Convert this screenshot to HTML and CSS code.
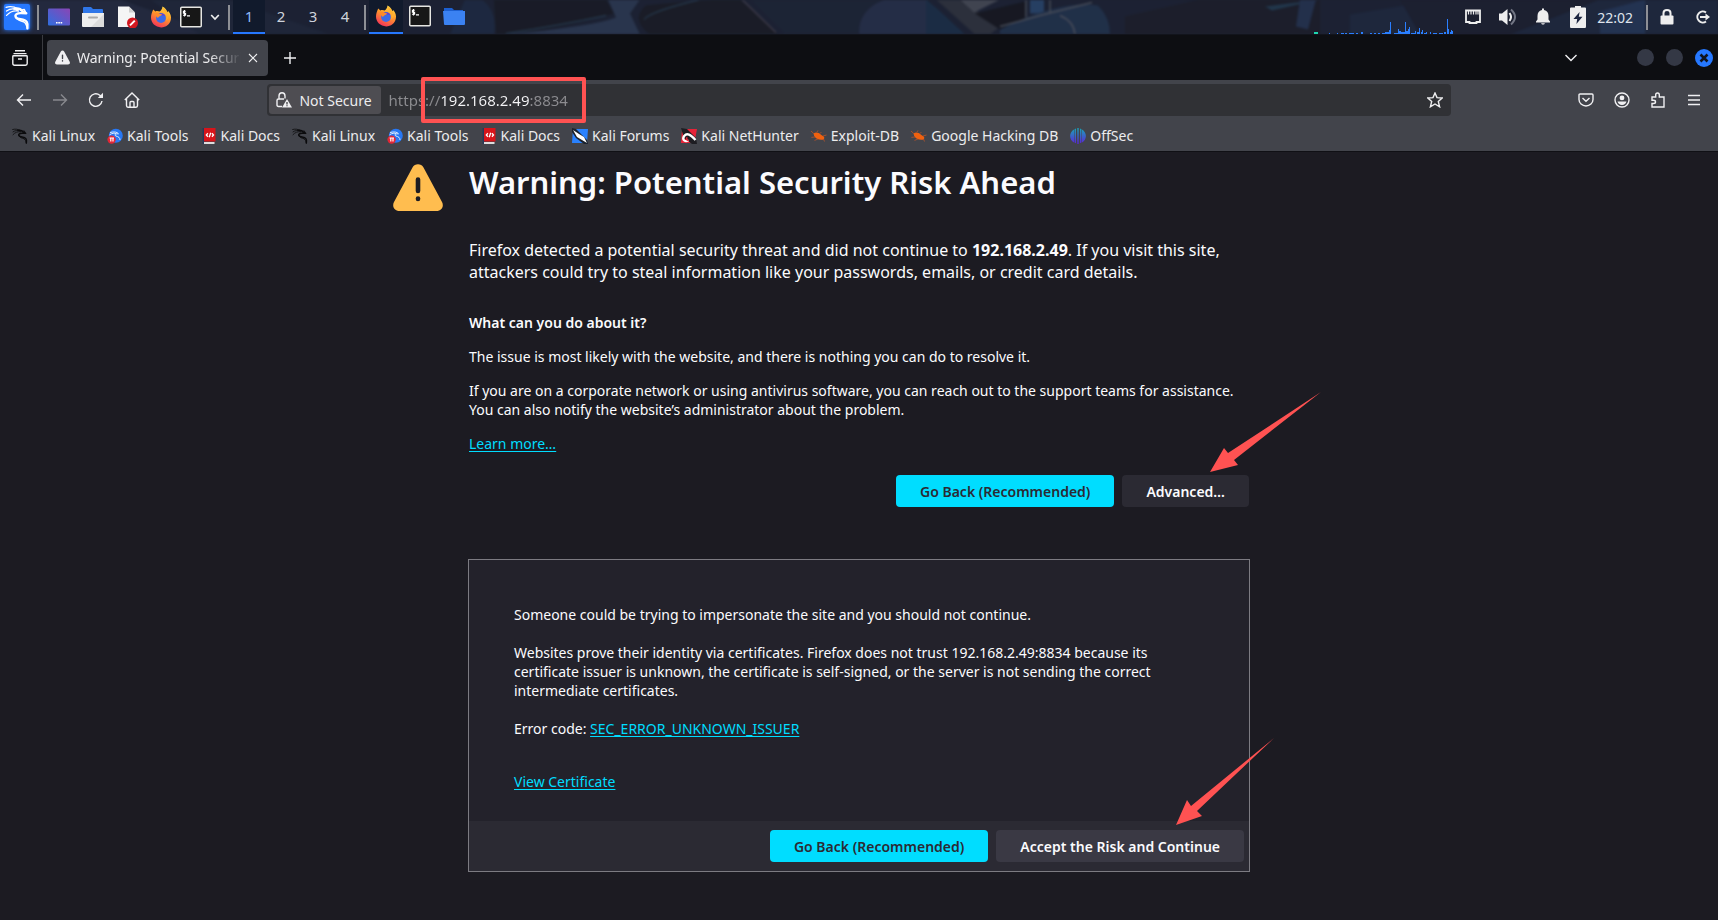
FILE: index.html
```html
<!DOCTYPE html>
<html lang="en">
<head>
<meta charset="utf-8">
<title>Warning: Potential Security Risk Ahead</title>
<link rel="stylesheet" href="styles.css">
</head>
<body>
<svg class="defs" aria-hidden="true">
  <defs>
    <linearGradient id="g-desk" x1="0" y1="1" x2="1" y2="0"><stop offset="0" stop-color="#2f6fe0"/><stop offset="1" stop-color="#8a45b5"/></linearGradient>
    <linearGradient id="g-fox" x1=".8" y1="0" x2=".3" y2="1"><stop offset="0" stop-color="#ffe14a"/><stop offset=".45" stop-color="#ff9a2b"/><stop offset="1" stop-color="#f4315a"/></linearGradient>
    <linearGradient id="g-off" x1="0" y1="0" x2="0" y2="1"><stop offset="0" stop-color="#18a6b8"/><stop offset="1" stop-color="#5b22d8"/></linearGradient>
  </defs>
  <symbol id="dragon" viewBox="0 0 24 24">
    <g fill="none" stroke="currentColor" stroke-linecap="round" stroke-linejoin="round">
      <path stroke-width="1.2" d="M1 2.2 C5 1.2 9 1.600 12.500 3.800 M1.500 5.800 C5 3.200 9 3.200 12.500 5 M1.500 10 C4.500 6.600 8.500 5 13 5.800"/>
      <path stroke-width="2.2" d="M9 3.600 C12 3 15.500 4.200 17 6.200 L20.500 8 L15.500 7.800 C11.500 7.600 9.200 9.400 10.300 11.600 C12 14.600 18.500 12.600 21 16.400 C22.200 18.400 21.800 20.500 21.500 22.500"/>
      <path stroke-width="1.4" d="M10.200 10.500 C11 15 15 14.800 18 16.200 C20.500 17.600 21 20 21.500 22.500 M15 5 L18.500 4.400 L20 7.500"/>
    </g>
  </symbol>
  <symbol id="firefox" viewBox="0 0 22 22">
    <path fill="url(#g-fox)" d="M3.2 3.4 5.4 5.4 C7 4.5 8.6 5 9.6 5.6 11 4.8 12.4 3 12.4 .6 15 1.8 16.8 4 17.4 6.2 L18.2 5 C20.6 7.6 21.6 10.6 20.8 13.8 19.8 18.4 16 21.4 11.2 21.4 5.4 21.4 1 17 1 11.6 1 8.6 2 6 3.2 3.4Z"/>
    <circle cx="11" cy="12" r="4.9" fill="#3c6be8"/>
    <path fill="#6a3bd0" d="M8 8.4 C10 6.8 14 7 15.4 9.8 L13 9.5Z"/>
    <path fill="#ff8a2a" d="M4.5 7.6 C6 6.4 8.4 6.8 9.6 7.8 L12.2 8.6 C11.6 10 9.8 10 9.2 10.6 8.7 12 7.2 12 6.7 11Z"/>
    <path fill="#ffb02e" d="M13.4 4.5 C17.2 7.4 17.4 12 15.8 15 18.7 12.8 19.8 8.2 16.4 5.2 15.5 3.6 14 2.6 13.2 2Z"/>
  </symbol>
  <symbol id="terminal" viewBox="0 0 22 21">
    <rect x=".75" y=".75" width="20.5" height="19.5" rx="1" fill="#171717" stroke="#e6e6e2" stroke-width="1.5"/>
    <path fill="none" stroke="#fff" stroke-width="1.1" d="M5.8 4.7 H3.4 V6.7 H5.6 V8.8 H3 M4.5 3.4 V10 M7 9.4 H10"/>
  </symbol>
  <symbol id="tri" viewBox="0 0 50 47">
    <path fill="currentColor" stroke="none" d="M19.5 3.5 C21.8 -.9 28.2 -.9 30.5 3.5 L49 38 C51.3 42.5 48.5 47 43.5 47 H6.5 C1.5 47 -1.3 42.5 1 38Z"/>
    <path stroke-width="4.6" stroke-linecap="round" d="M25 15.500 V27 M25 34.500 V35"/>
  </symbol>
  <symbol id="tools" viewBox="0 0 16 16">
    <circle cx="8.8" cy="7.8" r="7" fill="#2778f5"/>
    <path fill="none" stroke="#dceaff" d="M3 4.5 C7 3.4 10.5 4 11.5 5.8 C8 5.5 7 7 9 8 C11.5 8.8 13 9.6 13 12 M2.6 6.8 C5 5 7.6 5 9 5.6"/>
    <circle cx="4.6" cy="11.6" r="4.2" fill="#e32636"/>
    <path fill="none" stroke="#fff" stroke-width="1.2" d="M2.6 10 H7 M3.8 10 V13.6 M6 10 V13.6"/>
  </symbol>
  <symbol id="docs" viewBox="0 0 13 16">
    <path fill="#283858" d="M0 0 H3 V16 H0Z"/><path fill="#d7141a" d="M1.5 0 H13 V13.5 H1.5Z"/><path fill="#ddd" d="M1.5 14 H12 V16 H1.5Z"/>
    <path fill="none" stroke="#fff" stroke-width="1.3" d="M5.4 5.3 3.8 7 5.4 8.7 M9.4 5.3 11 7 9.4 8.7 M8.2 4.8 6.7 9.2"/>
  </symbol>
  <symbol id="forums" viewBox="0 0 16 16">
    <path fill="#2a82ff" d="M1 1 H16 L15 15 H0Z"/><path fill="#1b222d" d="M0 0 4 1 15 12 16 16 H12 L4 10 0 4Z"/><path fill="#fff" d="M1 2 7 6 12 9 15 15 10 12 5 9Z"/>
  </symbol>
  <symbol id="hunter" viewBox="0 0 16 16">
    <path fill="#e62338" d="M1 1 H16 L14 12 9 15 H0Z"/><path fill="#1d1d22" d="M0 0 6 1 15 10 16 16 H11 L3 10Z"/>
    <path fill="none" stroke="#fff" stroke-width="2.3" d="M7.5 12.5 C3 14.5 1 11 3.2 8 C6 4.5 9.5 6.5 14.5 12"/>
    <path fill="none" stroke="#e62338" stroke-width="1.6" d="M7.8 12.4 C5.4 13 5 10 6.4 9.4"/>
  </symbol>
  <symbol id="bug" viewBox="0 0 16 16">
    <path fill="#f0610f" d="M2.500 5.500 C5 3.600 7.500 4.200 10 6.800 L13 8.800 C13.800 10.400 12.800 12 11.400 11.800 C7.500 12.200 4.500 10.400 3.200 8Z"/>
    <path fill="none" stroke="#b8532a" stroke-width=".8" d="M0 3 2.8 5.600 M6 4 7 2.400 M9 5.600 10.400 4 M12 8 15.500 7 M12.500 11 13.500 13.500 M7 11 3.500 12.400 M4 9 .4 9.400"/>
  </symbol>
  <symbol id="offsec" viewBox="0 0 16 16">
    <path fill="url(#g-off)" d="M7.3 0 H8.7 V16 H7.3Z M6 .5 V15.3 L4.5 14.5 V1.2Z M10 .5 V15.3 L11.5 14.5 V1.2Z M4 1.5 C-1.2 4.5 -1.2 11.5 4 14.5Z M12 1.5 C17.2 4.5 17.2 11.5 12 14.5Z"/>
  </symbol>
</svg>

<header class="panel">
  <svg class="wallpaper" viewBox="0 0 1718 35" preserveAspectRatio="xMidYMid slice" aria-hidden="true">
    <rect width="1718" height="35" fill="#1c2234"/>
    <path fill="#252c42" d="M0 0 H120 L220 35 H0Z"/><path fill="#20283c" d="M150 0 H230 L330 35 H200Z"/>
    <path fill="#1e2b44" d="M465 0 H482 Q498 12 494 35 H450Z"/>
    <path fill="#191b25" d="M494 0 H606 L614 14 Q560 30 504 35 H496Z"/>
    <path fill="#2d3b55" d="M608 0 H640 L630 14 640 35 H500 Q590 28 616 18Z"/>
    <path fill="#1a1c25" d="M646 6 Q700 0 740 0 L778 35 H650 Q630 20 646 6Z"/>
    <path fill="none" stroke="#2c4a64" d="M644 20 Q650 12 700 0 M506 34 Q560 26 606 16"/>
    <path fill="none" stroke="#46404e" stroke-width="1.5" d="M742 0 L776 33"/>
    <path fill="#3b5f76" d="M784 34 Q790 30 800 34Z"/>
    <path fill="#1d2537" d="M750 0 H900 Q862 10 858 35 H786Z"/>
    <path fill="#27314c" d="M859 35 Q858 10 885 0 H928 V35Z"/>
    <path fill="#1b304a" d="M926 0 V35 H965 L938 10Z"/>
    <path fill="#30343f" d="M936 0 H960 L1000 27 990 35 H975Z"/>
    <path fill="#4a4e59" d="M960 0 H1000 L974 13Z"/>
    <path fill="#16171f" d="M975 14 1025 2 V22 L1000 30Z"/>
    <path fill="#29476f" d="M1030 0 H1044 V14 H1030Z"/>
    <path fill="#22344f" d="M1000 30 Q1060 0 1098 6 Q1110 18 1110 35 H1000Z"/>
    <path fill="none" stroke="#525762" stroke-width="1.4" d="M1000 27 1040 16 1092 3 M1026 0 V18 M1050 0 V14 M1060 16 Q1074 22 1075 35"/>
    <path fill="#1c1e2a" d="M1125 17 L1200 0 H1320 V35 H1125Z"/>
    <path fill="#233c52" d="M1265 7 1320 0 1272 11Z"/><path fill="#253452" d="M1300 0 H1316 L1308 30 1296 27Z"/>
    <path fill="#1f2940" d="M1350 15 1440 0 H1718 V35 H1350Z"/><path fill="#1c2030" d="M1400 0 H1600 L1510 35H1420Z"/>
    <path fill="#25385a" d="M1600 12 1645 0 V35 H1600Z"/>
  </svg>
  <button class="pbtn kali" aria-label="Applications"><svg><use href="#dragon"/></svg></button>
  <span class="psep"></span>
  <nav class="launchers">
    <button class="pbtn" aria-label="Show desktop"><svg viewBox="0 0 22 22"><rect y="2.5" width="22" height="17" rx="1" fill="url(#g-desk)"/><path fill="#fff" d="M8 16h1.6v1.4H8z M10.3 16h1.6v1.4h-1.6z M12.6 16h1.6v1.4h-1.6z"/></svg></button>
    <button class="pbtn" aria-label="Files"><svg viewBox="0 0 22 22"><path fill="#2f76e8" d="M1 2 Q1 1 2 1 H9 L11 3 H20 Q21 3 21 4 V8 H1Z"/><path fill="#eee" d="M0 7 H22 V20 Q22 21 21 21 H1 Q0 21 0 20Z"/><path fill="#dcdcdc" d="M22 8 V21 H9Z"/><path stroke="#aaa" stroke-width="2" stroke-linecap="round" d="M7 11.5 H15"/></svg></button>
    <button class="pbtn" aria-label="Text editor"><svg viewBox="0 0 22 22"><path fill="#f5f5f5" d="M2 .5 H13 L19 6.5 V21 H2Z"/><path fill="#d0d0d0" d="M13 .5 19 6.5 H13Z"/><circle cx="16.5" cy="17" r="5.5" fill="#d31820"/><path stroke="#fff" stroke-width="2" d="M14 19.4 18.8 14.6"/></svg></button>
    <div class="group">
      <button class="pbtn" aria-label="Firefox"><svg><use href="#firefox"/></svg></button>
      <button class="pbtn" aria-label="Terminal"><svg><use href="#terminal"/></svg></button>
      <button class="pbtn more" aria-label="More terminals"><svg viewBox="0 0 10 10"><path fill="none" stroke="#eee" stroke-width="1.7" d="M1.2 3 5 7 8.8 3"/></svg></button>
    </div>
  </nav>
  <span class="psep"></span>
  <nav class="spaces">
    <button class="space on">1</button><button class="space">2</button><button class="space">3</button><button class="space">4</button>
  </nav>
  <span class="psep"></span>
  <nav class="tasks">
    <button class="task on" aria-label="Firefox window"><svg><use href="#firefox"/></svg></button>
    <button class="task" aria-label="Terminal window"><svg><use href="#terminal"/></svg></button>
    <button class="task" aria-label="Files window"><svg viewBox="0 0 22 22"><path fill="#1c5fd0" d="M1 3 H9 L11 5 H20 V8 H1Z"/><path fill="#3b82f2" d="M0 6 H22 V19 Q22 20 21 20 H2 Q1 20 1 19Z"/></svg></button>
  </nav>
  <svg class="graph" viewBox="0 0 140 34" aria-label="CPU graph" role="img">
    <path fill="#1fd6b0" d="M0 32h4v2H0z"/>
    <path fill="#2a7fff" d="M15 33h1v1h-1z M23 33h1v1h-1z M27 33h3v1h-3z M31 33h2v1h-2z M35 33h5v1h-5z M42 33h2v1h-2z M47 32h2v2h-2z M56 33h2v1h-2z M60 33h2v1h-2z M64 33h2v1h-2z M68 33h4v1h-4z M71 32h5v2h-5z M75 30h1v4h-1z M76 22h1v12h-1z M80 33h4v1h-4z M84 29h1v5h-1z M85 31h2v3h-2z M87 32h4v2h-4z M91 22h1v12h-1z M92 31h2v3h-2z M94 29h1v5h-1z M95 27h1v7h-1z M97 33h4v1h-4z M101 31h1v3h-1z M103 32h2v2h-2z M105 28h1v6h-1z M107 32h1v2h-1z M108 30h1v4h-1z M110 33h3v1h-3z M112 32h1v2h-1z M116 32h1v2h-1z M119 33h4v1h-4z M125 33h4v1h-4z M130 32h2v2h-2z M133 19h1v15h-1z M134 29h1v5h-1z M136 32h1v2h-1z M137 30h1v4h-1z M138 31h1v3h-1z"/>
  </svg>
  <div class="tray">
    <button class="pbtn" aria-label="Network"><svg viewBox="0 0 22 22"><path fill="none" stroke="#eee" stroke-width="1.8" d="M4 4.5 H18 V16 H14.5 V17 H7.5 V16 H4Z"/><path stroke="#eee" stroke-width="1.2" d="M6.5 5 V8.5 M9 5 V8.5 M11.5 5 V8.5 M14 5 V8.5 M16 5 V8.5"/></svg></button>
    <button class="pbtn" aria-label="Volume"><svg viewBox="0 0 22 22"><path fill="#eee" d="M2 7.5 H5 L10.5 3 V19 L5 14.5 H2Z"/><path fill="none" stroke="#eee" stroke-width="2" d="M12.5 7 Q15.5 11 12.5 15"/><path fill="none" stroke="#727684" stroke-width="2" d="M14 3.5 Q22 11 14 18.5"/></svg></button>
    <button class="pbtn" aria-label="Notifications"><svg viewBox="0 0 22 22"><path fill="#eee" d="M10 2.5 H12 V4 Q16.5 5 16.5 10 V13.5 L18 15.5 V16.5 H4 V15.5 L5.5 13.5 V10 Q5.5 5 10 4Z M9 17.2 H13 L12 18.4 H10Z"/></svg></button>
    <button class="pbtn" aria-label="Battery"><svg viewBox="0 0 22 22"><path fill="#eee" d="M8 0 H14 V1.5 H18 Q19 1.5 19 2.5 V20.5 Q19 22 18 22 H4 Q3 22 3 20.5 V2.5 Q3 1.5 4 1.5 H8Z"/><path fill="#1c2540" d="M12.6 6 6.5 13 H10.2 L9.4 18 15.5 10.8 H11.8Z"/></svg></button>
    <time class="clock">22:02</time>
  </div>
  <span class="psep"></span>
  <div class="tray session">
    <button class="pbtn" aria-label="Lock"><svg viewBox="0 0 22 22"><rect x="4.5" y="9.5" width="13" height="9" rx="1" fill="#eee"/><path fill="none" stroke="#eee" stroke-width="2" d="M7.5 10 V7 Q7.5 4 11 4 Q14.500 4 14.500 7 V10"/></svg></button>
    <button class="pbtn" aria-label="Log out"><svg viewBox="0 0 22 22"><path fill="none" stroke="#eee" stroke-width="2" d="M15 6.500 A5.500 5.500 0 1 0 15 15.500 M9 11 H16"/><path fill="#eee" d="M14.500 7.500 19 11 14.500 14.500Z"/></svg></button>
  </div>
</header>

<div class="tabbar">
  <button class="tool" aria-label="Recent browsing"><svg viewBox="0 0 16 16"><path d="M3 .8 H13 M1.500 3.600 H14.500 M.8 6.500 Q.8 5.800 1.500 5.800 H14.500 Q15.200 5.800 15.200 6.500 V13.500 Q15.200 15.200 13.500 15.200 H2.500 Q.8 15.200 .8 13.500Z M6 9 H10"/></svg></button>
  <span class="tabsep"></span>
  <div class="tab">
    <svg class="tabicon"><use href="#tri"/></svg>
    <span class="tabtitle">Warning: Potential Security Risk Ahead</span>
    <button class="close" aria-label="Close tab"><svg viewBox="0 0 10 10"><path d="M1 1 9 9 M9 1 1 9"/></svg></button>
  </div>
  <button class="tool plus" aria-label="New tab"><svg viewBox="0 0 16 16"><path d="M8 2 V14 M2 8 H14"/></svg></button>
  <button class="tool alltabs" aria-label="List all tabs"><svg viewBox="0 0 16 16"><path d="M2.500 5 8 10.500 13.500 5"/></svg></button>
  <div class="winbtns">
    <button class="dot" aria-label="Minimize"></button>
    <button class="dot" aria-label="Maximize"></button>
    <button class="dot quit" aria-label="Close window"><svg viewBox="0 0 18 18"><path fill="none" stroke="#10131c" stroke-width="2.600" d="M5.500 5.500 12.500 12.500 M12.500 5.500 5.500 12.500"/></svg></button>
  </div>
</div>

<div class="navbar">
  <div class="tools">
    <button class="tool" aria-label="Back"><svg viewBox="0 0 16 16"><path d="M15 8 H1.500 M7 2.500 1.500 8 7 13.500"/></svg></button>
    <button class="tool" aria-label="Forward" disabled><svg viewBox="0 0 16 16"><path d="M1 8 H14.500 M9 2.500 14.500 8 9 13.500"/></svg></button>
    <button class="tool" aria-label="Reload"><svg viewBox="0 0 16 16"><path d="M14 9 A6.300 6.300 0 1 1 11.800 3.200 L14 5"/><path class="solid" d="M15 .8 V6 H9.800Z"/></svg></button>
    <button class="tool" aria-label="Home"><svg viewBox="0 0 16 16"><path d="M.8 8 8 1 15.200 8 M2.500 6.500 V13.500 Q2.500 15.200 4 15.200 H12 Q13.500 15.200 13.500 13.500 V6.500 M6 15 V10.500 Q6 9.500 7 9.500 H9 Q10 9.500 10 10.500 V15"/></svg></button>
  </div>
  <div class="urlbar">
    <button class="secure"><svg viewBox="0 0 16 16"><path d="M3 7 V4 Q3 .8 6 .8 Q9 .8 9 4 V6.500 M6 14.500 H2.500 Q1 14.500 1 13 V8.500 Q1 7 2.500 7 H8"/><path class="solid" d="M11 7 16 15.500 H6Z"/><path class="cut" d="M11 10 V12.500 M11 13.300 V14.300"/></svg>Not Secure</button>
    <input class="url" type="text" aria-label="Address" value="https://192.168.2.49:8834">
    <button class="star" aria-label="Bookmark this page"><svg viewBox="0 0 16 16"><path d="M8 1 10 5.600 15.200 6 11.300 9.400 12.600 14.800 8 12 3.400 14.800 4.700 9.400 .8 6 6 5.600Z"/></svg></button>
    <span class="highlight"></span>
  </div>
  <div class="tools">
    <button class="tool" aria-label="Pocket"><svg viewBox="0 0 16 16"><path d="M2 2 H14 Q15 2 15 3 V7.500 A7 6.500 0 0 1 1 7.500 V3 Q1 2 2 2Z M4.500 6 8 9.300 11.500 6"/></svg></button>
    <button class="tool" aria-label="Account"><svg viewBox="0 0 16 16"><circle cx="8" cy="8" r="7"/><path class="solid" d="M8 3.500 A2.400 2.400 0 1 1 8 8.300 2.400 2.400 0 1 1 8 3.500Z M3.500 9.600 H12.500 Q11.500 13 8 13 4.500 13 3.500 9.600Z"/></svg></button>
    <button class="tool" aria-label="Extensions"><svg viewBox="0 0 16 16"><path d="M2 5 H5.700 V3 Q5.700 1 7.500 1 9.300 1 9.300 3 V5 H14 V15 H2 V11.500 H3.500 Q5.500 11.500 5.500 10 5.500 8.300 3.500 8.300 H2Z"/></svg></button>
    <button class="tool" aria-label="Menu"><svg viewBox="0 0 16 16"><path d="M2 3.500 H14 M2 8 H14 M2 12.500 H14"/></svg></button>
  </div>
</div>

<nav class="bookmarks">
  <a href="#"><svg class="ink"><use href="#dragon"/></svg>Kali Linux</a>
  <a href="#"><svg><use href="#tools"/></svg>Kali Tools</a>
  <a href="#"><svg><use href="#docs"/></svg>Kali Docs</a>
  <a href="#"><svg class="ink"><use href="#dragon"/></svg>Kali Linux</a>
  <a href="#"><svg><use href="#tools"/></svg>Kali Tools</a>
  <a href="#"><svg><use href="#docs"/></svg>Kali Docs</a>
  <a href="#"><svg><use href="#forums"/></svg>Kali Forums</a>
  <a href="#"><svg><use href="#hunter"/></svg>Kali NetHunter</a>
  <a href="#"><svg><use href="#bug"/></svg>Exploit-DB</a>
  <a href="#"><svg><use href="#bug"/></svg>Google Hacking DB</a>
  <a href="#"><svg><use href="#offsec"/></svg>OffSec</a>
</nav>

<main class="page">
  <div class="content">
    <div class="heading">
      <svg class="bigwarn" aria-hidden="true"><use href="#tri"/></svg>
      <h1>Warning: Potential Security Risk Ahead</h1>
    </div>
    <p class="lead">Firefox detected a potential security threat and did not continue to <b>192.168.2.49</b>. If you visit this site, attackers could try to steal information like your passwords, emails, or credit card details.</p>
    <h2>What can you do about it?</h2>
    <p>The issue is most likely with the website, and there is nothing you can do to resolve it.</p>
    <p>If you are on a corporate network or using antivirus software, you can reach out to the support teams for assistance. You can also notify the website’s administrator about the problem.</p>
    <p><a href="#">Learn more…</a></p>
    <div class="actions">
      <button class="btn primary">Go Back (Recommended)</button>
      <button class="btn">Advanced…</button>
      <svg class="arrow" viewBox="0 0 112 80" aria-hidden="true"><path d="M0 80 14 56 18 61 111 0 24 68 28 73Z"/></svg>
    </div>
    <section class="advanced">
      <div class="details">
        <p>Someone could be trying to impersonate the site and you should not continue.</p>
        <p>Websites prove their identity via certificates. Firefox does not trust 192.168.2.49:8834 because its certificate issuer is unknown, the certificate is self-signed, or the server is not sending the correct intermediate certificates.</p>
        <p>Error code: <a href="#">SEC_ERROR_UNKNOWN_ISSUER</a></p>
        <p class="cert"><a href="#">View Certificate</a></p>
      </div>
      <div class="actions footer">
        <button class="btn primary">Go Back (Recommended)</button>
        <button class="btn">Accept the Risk and Continue</button>
        <svg class="arrow low" viewBox="0 0 98 88" aria-hidden="true"><path d="M0 87 11 62 15 68 98 0 21 73 26 78Z"/></svg>
      </div>
    </section>
  </div>
</main>
</body>
</html>
```
FILE: styles.css
```css
* { box-sizing: border-box; }
body { margin: 0; min-height: 100vh; display: flex; flex-direction: column; background: #1c1b22; color: #fbfbfe; font: 14px/19px "Noto Sans", "Open Sans", sans-serif; }
button { font: inherit; color: inherit; border: 0; padding: 0; background: none; display: flex; align-items: center; justify-content: center; }
a { color: #00ddff; text-underline-offset: 2px; }
h1, h2, p { margin: 0; }
.defs { position: absolute; width: 0; height: 0; }

.panel { position: relative; isolation: isolate; display: flex; align-items: center; height: 35px; padding: 0 5px 0 4px; background: #1c2030; border-bottom: 1px solid #12141c; overflow: hidden; }
.wallpaper { position: absolute; inset: 0; width: 100%; height: 100%; z-index: -1; opacity: .8; filter: blur(1px); }
.panel button svg { width: 22px; height: 22px; }
.psep { width: 2px; height: 25px; background: #8d8f95; flex: none; }
.kali { width: 26px; height: 26px; margin-right: 7px; border-radius: 2px; background: #2678ff; color: #fff; box-shadow: 0 0 4px #2678ff; }
.panel .kali svg { width: 25px; height: 25px; }
.launchers { display: flex; align-items: center; gap: 12px; margin: 0 8px 0 9px; }
.group { display: flex; align-items: center; gap: 8px; }
.panel .more svg { width: 10px; height: 10px; }
.spaces, .tasks { display: flex; align-self: stretch; margin: 0 3px; }
.space { width: 32px; font-size: 15px; color: #cfd3dc; border-bottom: 2px solid transparent; }
.task { width: 34px; border-bottom: 2px solid transparent; }
.space.on, .task.on { background: #111a2c; border-color: #2678ff; }
.space.on { color: #8fb8f5; }
.graph { width: 140px; height: 34px; margin-left: auto; margin-right: 8px; }
.tray { display: flex; align-items: center; gap: 13px; margin-right: 13px; }
.session { margin: 0 0 0 8px; }
.clock { color: #dfe3ec; margin-left: -5px; }

.tabbar { display: flex; align-items: center; height: 45px; padding: 0 5px 0 6px; background: #0d0e12; }
.tool { width: 28px; height: 28px; }
.tool svg, .star svg, .secure svg, .close svg { width: 16px; height: 16px; fill: none; stroke: #f0f0f2; stroke-width: 1.4; flex: none; }
.solid { fill: #f0f0f2; stroke: none; }
.cut { stroke: #4e4d52; }
.tool:disabled { opacity: .4; }
.tabsep { align-self: stretch; width: 1px; background: #3a3b40; margin: 0 4px 0 8px; }
.tab { display: flex; align-items: center; width: 221px; height: 36px; padding: 0 10px 0 8px; gap: 7px; border-radius: 4px; background: #42444b; }
.tabicon { width: 15px; height: 15px; color: #f0f0f2; flex: none; }
.tabicon, .bigwarn { stroke: #42444b; }
.tabtitle { flex: 1; min-width: 0; overflow: hidden; white-space: nowrap; color: #ececee; mask-image: linear-gradient(to left, transparent, #000 32px); }
.tab .close svg { width: 10px; height: 10px; stroke-width: 1.1; }
.plus { margin-left: 8px; }
.alltabs { margin-left: auto; }
.winbtns { display: flex; align-items: center; gap: 12px; margin-left: 52px; }
.dot { width: 17px; height: 17px; border-radius: 50%; background: #343845; }
.quit { width: 18px; height: 18px; background: #2678ff; }
.quit svg { width: 18px; height: 18px; }

.navbar { display: flex; align-items: center; height: 40px; padding: 0 10px; background: #42444b; }
.tools { display: flex; gap: 8px; }
.urlbar { position: relative; flex: 1; display: flex; align-items: center; height: 32px; margin: 0 7.15%; padding: 2px; border-radius: 4px; background: #303135; }
.secure { height: 28px; padding: 0 9px 0 7px; gap: 7px; border-radius: 3px; background: #4e4d52; color: #ececee; white-space: nowrap; }
.url { flex: 1; min-width: 0; margin-left: 8px; padding: 0; border: 0; outline: 0; font: inherit; font-size: 15px; color: #8c8c90; background: linear-gradient(90deg, #8c8c90 52px, #f4f4f6 52px 141px, #8c8c90 141px); background-clip: text; -webkit-text-fill-color: transparent; }
.star { width: 28px; height: 28px; }
.highlight { position: absolute; left: 154px; top: -7px; width: 165px; height: 46px; border: 4px solid #ff5252; border-radius: 2px; pointer-events: none; }

.bookmarks { display: flex; align-items: center; gap: 12px; height: 32px; padding: 0 12px; background: #42444b; border-bottom: 1px solid #101015; white-space: nowrap; }
.bookmarks a { display: flex; align-items: center; gap: 4px; color: #ececee; text-decoration: none; }
.bookmarks svg { width: 16px; height: 16px; flex: none; }
.ink { color: #0b0b0d; }

.page { flex: 1; padding: 10px 24px 24px; display: flex; justify-content: center; }
.content { width: 780px; }
.heading { position: relative; }
.bigwarn { position: absolute; right: 100%; top: 2px; width: 50px; height: 47px; margin-right: 26px; color: #ffbd4f; stroke: #1c1b22; }
h1 { font-size: 31px; line-height: 40px; font-weight: 600; }
.lead { margin: 37px 0 30px; font-size: 16px; line-height: 22px; }
h2 { font-size: 14px; line-height: 19px; font-weight: 600; }
h2 ~ p { margin-top: 15px; }
.actions { position: relative; display: flex; justify-content: flex-end; gap: 8px; margin-top: 22px; }
.btn { height: 32px; padding: 0 24px; border-radius: 4px; background: #2b2a33; font-weight: 600; white-space: nowrap; }
.btn.primary { background: #00ddff; color: #2b2a33; }
.arrow { position: absolute; right: -73px; bottom: 35px; width: 112px; height: 80px; fill: #ff5252; pointer-events: none; }
.advanced { margin: 52px -1px 0; border: 1px solid #7c7b82; background: #23222b; }
.details { padding: 45px 45px 30px; display: grid; gap: 19px; }
.cert { margin-top: 15px; }
.footer { margin: 0; padding: 9px 5px; background: #2b2a33; }
.footer .btn { background: #3a3944; }
.footer .primary { background: #00ddff; }
.arrow.low { right: -25px; bottom: 45px; width: 98px; height: 88px; }
```
